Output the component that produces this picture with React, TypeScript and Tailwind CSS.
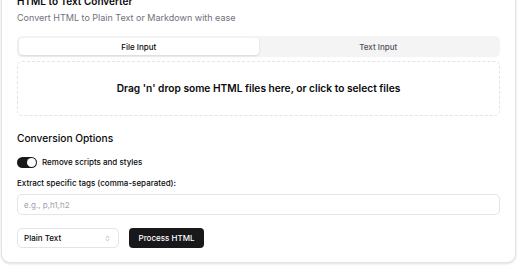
import React from "react";

export default function App() {
  return (
    <div className="w-[520px] h-[272px] overflow-hidden bg-white" style={{ fontFamily: "Inter, 'Liberation Sans', sans-serif" }}>
      <div className="ml-[1px] mt-[-22px] w-[515px] rounded-[9px] border border-[#e4e4e7] bg-white shadow-sm px-[15px] pt-[15px] pb-[14px]">
        <div className="text-[10px] font-semibold leading-[14px] text-[#09090b]">HTML to Text Converter</div>
        <div className="mt-[4px] text-[9px] leading-[12px] text-[#71717a]">Convert HTML to Plain Text or Markdown with ease</div>

        <div className="mt-[12px] h-[21px] rounded-[5px] bg-[#f4f4f5] p-[2px] flex">
          <div className="flex-1 rounded-[4px] bg-white shadow-sm flex items-center justify-center text-[8px] font-medium text-[#09090b]">File Input</div>
          <div className="flex-1 flex items-center justify-center text-[8px] font-medium text-[#52525b]">Text Input</div>
        </div>

        <div className="mt-[4px] h-[55px] rounded-[5px] border border-dashed border-[#dfe3ea] flex items-center justify-center text-[10.2px] font-semibold text-[#09090b]">
          Drag 'n' drop some HTML files here, or click to select files
        </div>

        <div className="mt-[15px] text-[10.2px] font-medium leading-[14px] text-[#09090b]">Conversion Options</div>

        <div className="mt-[11px] flex items-center gap-[5px]">
          <div className="w-[20px] h-[11px] rounded-full bg-[#18181b] flex items-center justify-end px-[1px]">
            <div className="w-[9px] h-[9px] rounded-full bg-white" />
          </div>
          <span className="text-[8px] font-medium text-[#09090b]">Remove scripts and styles</span>
        </div>

        <div className="mt-[9px] text-[8px] font-medium leading-[12px] text-[#09090b]">Extract specific tags (comma-separated):</div>

        <div className="mt-[5px] h-[21px] rounded-[5px] border border-[#e4e4e7] flex items-center px-[6px] text-[8px] text-[#a1a1aa]">
          e.g., p,h1,h2
        </div>

        <div className="mt-[13px] flex items-center gap-[10px]">
          <div className="w-[102px] h-[20px] rounded-[5px] border border-[#e4e4e7] flex items-center justify-between pl-[6px] pr-[7px] text-[8px] font-medium text-[#09090b]">
            <span>Plain Text</span>
            <svg width="7" height="9" viewBox="0 0 24 24" fill="none" stroke="#a1a1aa" strokeWidth="2.5" strokeLinecap="round" strokeLinejoin="round">
              <path d="m7 15 5 5 5-5" />
              <path d="m7 9 5-5 5 5" />
            </svg>
          </div>
          <div className="w-[75px] h-[20px] rounded-[4px] bg-[#18181b] flex items-center justify-center text-[8px] font-medium text-white">Process HTML</div>
        </div>
      </div>
    </div>
  );
}
